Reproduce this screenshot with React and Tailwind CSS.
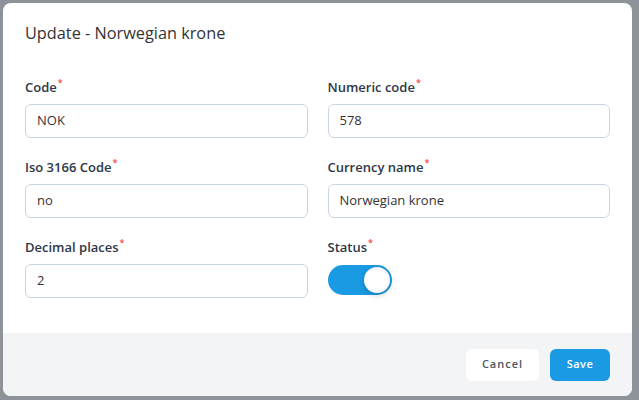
import React from "react";

function Star() {
  return (
    <span className="text-[#ef4444] text-[9px] leading-none ml-[1px] relative top-[-6px]">*</span>
  );
}

function Field({ label, value }) {
  return (
    <div className="flex flex-col">
      <label className="text-[13px] leading-[18px] font-semibold text-[#2d3748]">
        {label}
        <Star />
      </label>
      <div className="mt-[8px] h-[34px] rounded-[6px] border border-[#cbd5e1] flex items-center px-[11px] text-[13px] text-[#333333]">
        {value}
      </div>
    </div>
  );
}

export default function App() {
  return (
    <div
      className="w-[639px] h-[400px] bg-[#8e9299] pt-[3px] pl-[3px] overflow-hidden"
      style={{ fontFamily: '"Open Sans", "Noto Sans", sans-serif' }}
    >
      <div className="w-[629px] h-[393px] bg-white rounded-[8px] overflow-hidden flex flex-col">
        <div className="flex-1 px-[22px] pt-[18px]">
          <h2 className="text-[16.3px] leading-[24px] text-[#333333]">Update - Norwegian krone</h2>
          <div className="grid grid-cols-2 gap-x-[20px] gap-y-[20px] mt-[33px]">
            <Field label="Code" value="NOK" />
            <Field label="Numeric code" value="578" />
            <Field label="Iso 3166 Code" value="no" />
            <Field label="Currency name" value="Norwegian krone" />
            <Field label="Decimal places" value="2" />
            <div className="flex flex-col">
              <label className="text-[13px] leading-[18px] font-semibold text-[#2d3748]">
                Status
                <Star />
              </label>
              <div className="mt-[9px] w-[64px] h-[30px] rounded-full bg-[#1b9ae4] flex items-center justify-end pr-[2px]">
                <div className="w-[26px] h-[26px] rounded-full bg-white shadow-[0_2px_6px_rgba(0,0,0,0.2)]" />
              </div>
            </div>
          </div>
        </div>
        <div className="h-[63px] bg-[#f3f4f6] flex items-center justify-end gap-[11px] pr-[22px]">
          <button className="w-[73px] h-[32px] rounded-[6px] bg-white text-[11px] font-semibold tracking-[1px] text-[#4b5563]">
            Cancel
          </button>
          <button className="w-[60px] h-[32px] rounded-[6px] bg-[#1b9ae4] text-[11px] font-semibold tracking-[0.5px] text-white">
            Save
          </button>
        </div>
      </div>
    </div>
  );
}
